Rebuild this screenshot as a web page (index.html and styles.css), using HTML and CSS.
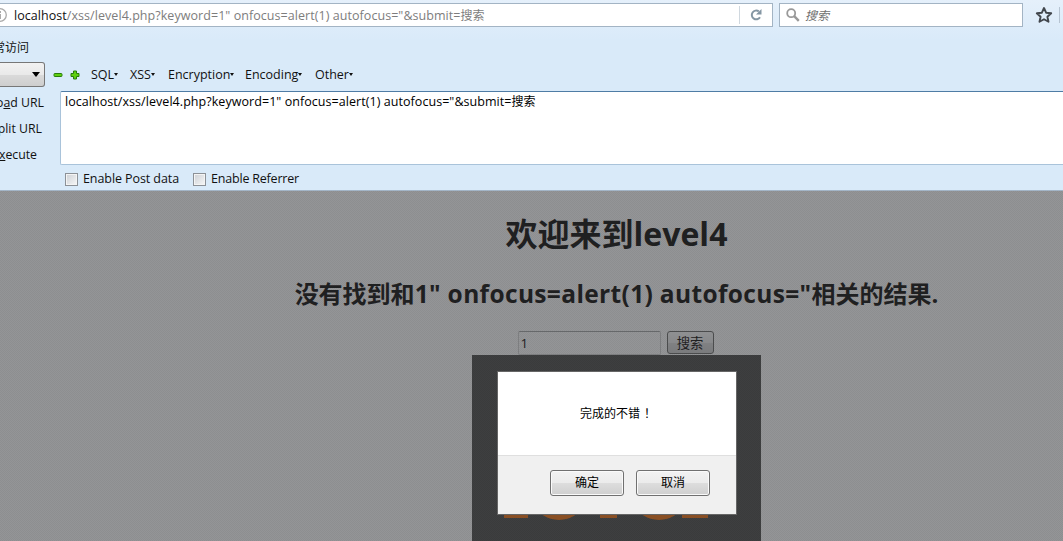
FILE: index.html
```html
<!DOCTYPE html>
<html lang="zh-CN">
<head>
<meta charset="utf-8">
<title>欢迎来到level4</title>
<link rel="stylesheet" href="styles.css">
</head>
<body>
<header class="chrome">
  <div class="navbar">
    <div class="address">
      <svg class="info" width="16" height="16" viewBox="0 0 16 16"><circle cx="8" cy="8" r="6.3" fill="none" stroke="#aaa" stroke-width="1.3"/><path d="M8 4v2M8 7v5" stroke="#aaa" stroke-width="2"/></svg>
      <span class="url"><b class="host">localhost</b>/xss/level4.php?keyword=1" onfocus=alert(1) autofocus="&amp;submit=<span class="cjk">搜索</span></span>
      <span class="reload"><svg width="12" height="12" viewBox="0 0 12 12"><path d="M8.8 2.4A4.4 4.4 0 1 0 10 8.2" fill="none" stroke="#8496a3" stroke-width="2"/><path d="M11.5 0v5.500H6z" fill="#8496a3"/></svg></span>
    </div>
    <div class="search">
      <svg width="14" height="14" viewBox="0 0 14 14"><circle cx="5.2" cy="5.2" r="4" fill="none" stroke="#999" stroke-width="1.8"/><path d="M8.2 8.2l4.6 4.6" stroke="#999" stroke-width="2.4"/></svg>
      <span class="hint">搜索</span>
    </div>
    <svg class="star" width="18" height="18" viewBox="0 0 18 18"><path d="M9 2l2.100 4.700 5.100.6-3.800 3.400 1.100 5.100L9 13.200l-4.500 2.600 1.100-5.100L1.800 7.300l5.100-.6z" fill="none" stroke="#42474d" stroke-width="1.9" stroke-linejoin="round"/></svg>
    <i class="divider"></i>
  </div>
  <div class="bookmarks"><span>常访问</span></div>
  <div class="menus">
    <div class="select"><i class="arrow"></i></div>
    <svg class="minus" width="10" height="10" viewBox="0 0 10 10"><rect x="1" y="3.5" width="8" height="3" rx=".8" fill="#60cf10" stroke="#287d0c"/></svg>
    <svg class="plus" width="10" height="10" viewBox="0 0 10 10"><path d="M3.5 1h3v2.500H9v3H6.500V9h-3V6.500H1v-3h2.500z" fill="#60cf10" stroke="#287d0c" stroke-linejoin="round"/></svg>
    <span class="menu sql">SQL<i></i></span>
    <span class="menu xss">XSS<i></i></span>
    <span class="menu enc">Encryption<i></i></span>
    <span class="menu cod">Encoding<i></i></span>
    <span class="menu oth">Other<i></i></span>
  </div>
  <div class="hackbar">
    <div class="actions">
      <span>Lo<u>a</u>d URL</span>
      <span>Split URL</span>
      <span>E<u>x</u>ecute</span>
    </div>
    <div class="editor"><span class="url">localhost/xss/level4.php?keyword=1" onfocus=alert(1) autofocus="&amp;submit=<span class="cjk">搜索</span></span></div>
  </div>
  <div class="options">
    <span class="check"><i></i><span>Enable Post data</span></span>
    <span class="check"><i></i><span>Enable Referrer</span></span>
  </div>
</header>
<main class="page">
  <h1>欢迎来到<span>level4</span></h1>
  <h2>没有找到和<span>1" onfocus=alert(1) autofocus="</span>相关的结果.</h2>
  <div class="form"><div class="field">1</div><div class="submit">搜索</div></div>
  <div class="poster">
    <svg width="289" height="186" viewBox="0 0 289 186" fill="#894f24"><path d="M32 154h24v9H32zM128 154h17v9h-17zM210 154h26v9h-26z"/><ellipse cx="87" cy="150" rx="22" ry="15"/><ellipse cx="187" cy="150" rx="22" ry="15"/></svg>
  </div>
</main>
<div class="dialog">
  <div class="message">完成的不错<span class="mark">！</span></div>
  <div class="buttons"><div class="button">确定</div><div class="button">取消</div></div>
</div>
</body>
</html>
```

FILE: styles.css
```css
* { box-sizing: border-box; }
body {
  margin: 0;
  width: 1063px;
  height: 541px;
  overflow: hidden;
  position: relative;
  font: 12px/16px "Open Sans", "Noto Sans CJK SC", sans-serif;
  color: #111;
  white-space: nowrap;
}
svg { display: block; flex: none; }
.chrome {
  height: 191px;
  background: linear-gradient(#e5f0fb, #d9eaf9 40px);
  border-bottom: 1px solid #a3b5c7;
}
.navbar { display: flex; align-items: center; height: 30px; }
.address {
  display: flex;
  align-items: center;
  width: 773px;
  height: 24px;
  background: #fff;
  border: 1px solid #a3b4c4;
  border-left: 0;
  color: #7d7d7d;
}
.info { margin-left: -8px; }
.address .url { margin-left: 6px; padding-top: 2px; }
.host { font-weight: 400; color: #111; }
.url { font-size: 12.5px; letter-spacing: 0.055px; }
.cjk { font-size: 12px; letter-spacing: 0; }
.reload {
  margin-left: auto;
  width: 33px;
  height: 18px;
  padding: 3px 0 0 10px;
  border-left: 1px solid #d0d8df;
}
.search {
  display: flex;
  align-items: center;
  gap: 5px;
  width: 244px;
  height: 24px;
  margin-left: 6px;
  padding-left: 6px;
  background: #fff;
  border: 1px solid #a3b4c4;
}
.hint { font-style: italic; color: #707070; padding-top: 2px; }
.star { margin-left: 12px; }
.divider { width: 1px; height: 16px; margin-left: 6px; background: #b6c4d2; }
.bookmarks { height: 32px; padding: 10px 0 0; }
.bookmarks span { margin-left: -7px; }
.menus { display: flex; align-items: center; height: 25px; }
.select {
  width: 45px;
  height: 25px;
  border: 1px solid #777;
  border-left: 0;
  border-radius: 0 3px 3px 0;
  background: linear-gradient(#f2f2f2, #e9e9e9 50%, #dadada 51%, #cecece);
}
.arrow {
  display: block;
  margin: 9px 0 0 32px;
  width: 0;
  border: 4px solid transparent;
  border-top: 5px solid #000;
  border-bottom: 0;
}
.minus { margin-left: 8px; }
.plus { margin-left: 7px; }
.menu { display: flex; align-items: center; font-size: 12.5px; }
.menu i { border: 2.5px solid transparent; border-top: 3px solid #111; border-bottom: 0; }
.sql { margin-left: 11px; width: 39px; }
.xss { width: 38px; }
.enc { width: 77px; }
.cod { width: 70px; }
.hackbar { display: flex; height: 78px; padding-top: 4px; }
.actions {
  display: flex;
  flex-direction: column;
  gap: 10px;
  width: 44px;
  padding-top: 4px;
  align-items: flex-end;
  font-size: 12.3px;
}
.actions span:nth-child(2) { margin-right: 2px; }
.actions span:nth-child(3) { margin-right: 7px; }
.actions u { text-underline-offset: 1px; }
.editor {
  flex: 1;
  margin-left: 16px;
  padding: 2px 4px;
  border: 1px solid #a9c3da;
  border-top-color: #4f7ca5;
  border-right: 0;
  border-radius: 2px 0 0 2px;
  background: #fff;
  color: #000;
}
.options { display: flex; gap: 14px; padding: 6px 0 0 65px; }
.check { display: flex; align-items: center; gap: 5px; font-size: 12.5px; letter-spacing: -0.08px; }
.check + .check { letter-spacing: -0.2px; }
.check i {
  width: 13px;
  height: 13px;
  border: 1px solid #8c9197;
  background: linear-gradient(135deg, #ccd0d5, #f7f7f7);
  box-shadow: inset 0 0 0 1px #f4f4f4;
}
.page {
  display: flex;
  flex-direction: column;
  align-items: center;
  height: 350px;
  padding-left: 170px;
  background: repeating-conic-gradient(#8d8e90 0 25%, #949597 0 50%) 0 0 / 2px 2px;
  color: #1f2021;
}
h1, h2 { margin: 0; font-weight: 700; }
h1 { margin-top: 20px; font-size: 32px; line-height: 46px; }
h2 { margin-top: 19px; font-size: 24px; line-height: 36px; }
h2 span { font-size: 24.5px; letter-spacing: 0.35px; }
.form { display: flex; gap: 6px; margin: 18px 2px 0 0; height: 25px; font-size: 13.33px; }
.field { width: 143px; height: 24px; border: 1px solid #7d7e80; border-top-color: #66686a; border-radius: 2px; padding: 3px 2px; margin-top: 1px; }
.submit {
  width: 47px;
  height: 23px;
  margin-top: 1px;
  border: 1px solid #4b4c4d;
  border-radius: 3px;
  background: linear-gradient(#8f9092, #88898b 50%, #808183 51%, #7a7b7d);
  line-height: 22px;
  text-align: center;
}
.poster {
  width: 289px;
  height: 186px;
  background: repeating-conic-gradient(#3a3b3c 0 25%, #3e3f40 0 50%) 0 0 / 2px 2px;
}
.dialog {
  position: absolute;
  left: 497px;
  top: 371px;
  width: 240px;
  height: 144px;
  border: 1px solid #666;
  background: #fff;
  color: #000;
}
.message { height: 83px; padding-right: 2px; text-align: center; line-height: 83px; }
.mark { padding-left: 4px; margin-right: -4px; }
.buttons {
  display: flex;
  justify-content: flex-end;
  gap: 12px;
  height: 59px;
  padding: 14px 26px 0 0;
  background: #f0f0f0;
  border-top: 1px solid #dfdfdf;
}
.button {
  width: 74px;
  height: 26px;
  border: 1px solid #707070;
  border-radius: 3px;
  background: linear-gradient(#f2f2f2, #ebebeb 50%, #dddddd 51%, #cfcfcf);
  box-shadow: inset 0 0 0 1px #fafafa;
  line-height: 23px;
  text-align: center;
}
```
